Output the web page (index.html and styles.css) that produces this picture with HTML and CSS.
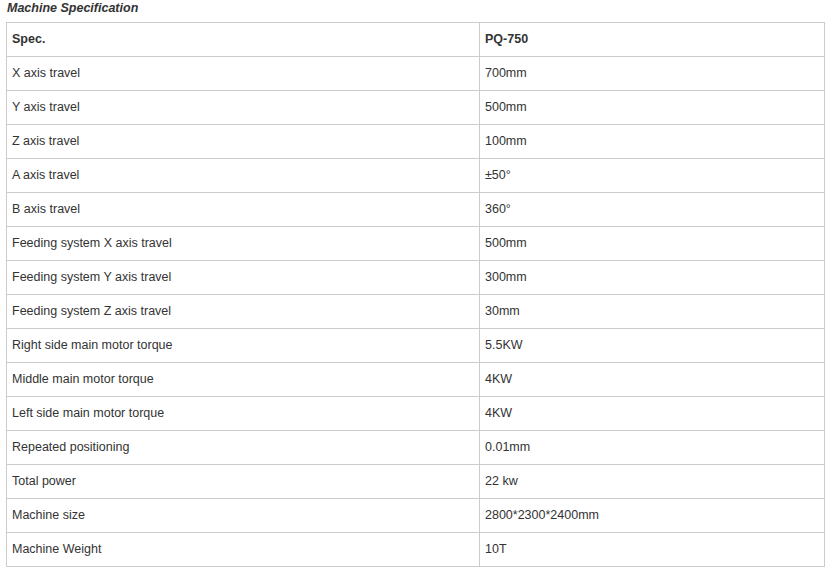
FILE: index.html
```html
<!DOCTYPE html>
<html>
<head>
<meta charset="utf-8">
<link rel="stylesheet" href="styles.css">
</head>
<body>
<p class="title">Machine Specification</p>
<table class="spec">
<colgroup><col class="c1"><col class="c2"></colgroup>
<tr class="head"><td>Spec.</td><td>PQ-750</td></tr>
<tr><td>X axis travel</td><td>700mm</td></tr>
<tr><td>Y axis travel</td><td>500mm</td></tr>
<tr><td>Z axis travel</td><td>100mm</td></tr>
<tr><td>A axis travel</td><td>±50°</td></tr>
<tr><td>B axis travel</td><td>360°</td></tr>
<tr><td>Feeding system X axis travel</td><td>500mm</td></tr>
<tr><td>Feeding system Y axis travel</td><td>300mm</td></tr>
<tr><td>Feeding system Z axis travel</td><td>30mm</td></tr>
<tr><td>Right side main motor torque</td><td>5.5KW</td></tr>
<tr><td>Middle main motor torque</td><td>4KW</td></tr>
<tr><td>Left side main motor torque</td><td>4KW</td></tr>
<tr><td>Repeated positioning</td><td>0.01mm</td></tr>
<tr><td>Total power</td><td>22 kw</td></tr>
<tr><td>Machine size</td><td>2800*2300*2400mm</td></tr>
<tr><td>Machine Weight</td><td>10T</td></tr>
</table>
</body>
</html>
```
FILE: styles.css
```css
html, body {
  margin: 0;
  padding: 0;
  background: #fff;
}
body {
  font-family: "Liberation Sans", Arial, sans-serif;
  font-size: 12.5px;
  color: #333;
}
.title {
  margin: 0;
  padding: 0 0 0 7px;
  height: 22px;
  line-height: 16px;
  font-weight: bold;
  font-style: italic;
  color: #333;
}
.spec {
  border-collapse: collapse;
  margin-left: 6px;
  width: 819px;
  table-layout: fixed;
}
.spec .c1 { width: 473px; }
.spec td {
  border: 1px solid #ccc;
  height: 34px;
  padding: 0 5px 2px;
  vertical-align: middle;
  box-sizing: border-box;
}
.spec tr.head td {
  font-weight: bold;
}
```
